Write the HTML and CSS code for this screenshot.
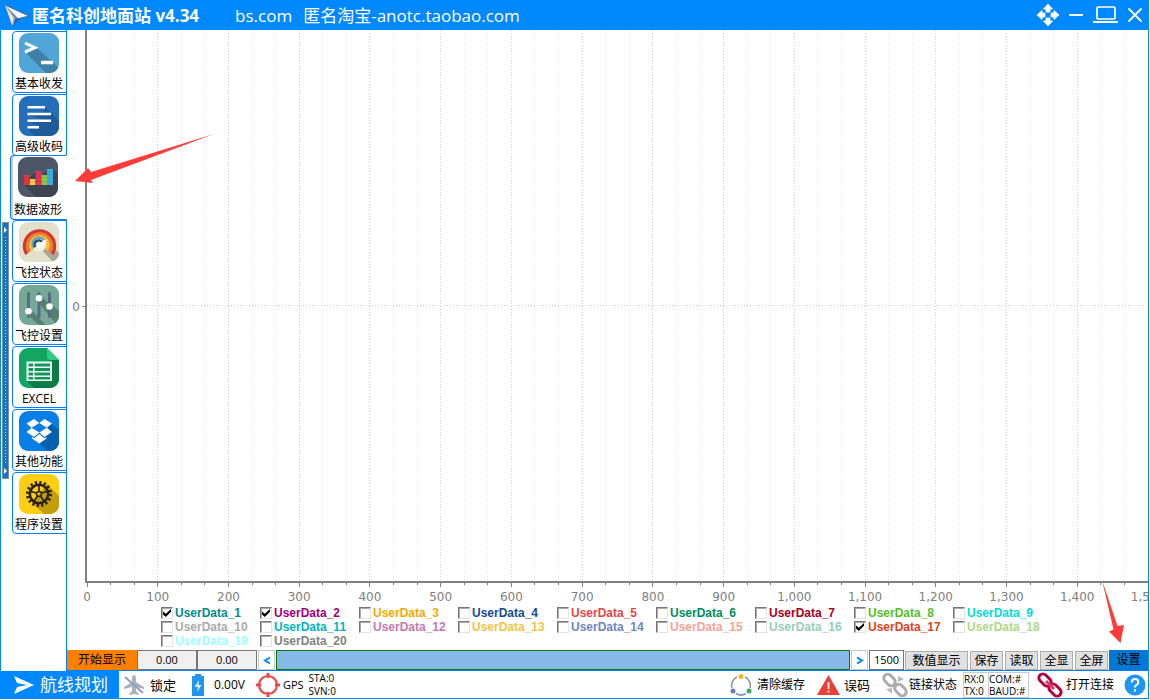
FILE: index.html
```html
<!DOCTYPE html>
<html lang="zh-CN">
<head>
<meta charset="utf-8">
<title>匿名科创地面站 v4.34</title>
<link rel="stylesheet" href="styles.css">
</head>
<body>
<div class="window">
  <header class="titlebar">
    <svg class="logo" viewBox="0 0 26 24"><path d="M1 1 25 12 15 15 8 22Z" fill="#f4f8fc" stroke="#51677f"/><path d="M1 1 15 15 11 15 8 22Z" fill="#7a8b9c"/><path d="M1 1 10 14 8 21Z" fill="#dfe8ef"/><path d="M11 15 23 12 15 15 9 21Z" fill="#1a62bb"/></svg>
    <h1 class="app-name">匿名科创地面站 v4.34</h1>
    <span class="site">bs.com</span>
    <span class="site">匿名淘宝-anotc.taobao.com</span>
    <div class="window-buttons">
      <button class="win-btn" aria-label="移动"><svg width="22" height="22" viewBox="0 0 22 22"><path d="M11 0 15.500 5H13V8H9V5H6.500ZM11 22 6.500 17H9V14H13V17H15.500ZM0 11 5 6.500V9H8V13H5V15.500ZM22 11 17 15.500V13H14V9H17V6.500Z" fill="#fff" stroke="#fff" stroke-width=".8"/></svg></button>
      <button class="win-btn" aria-label="最小化"><svg width="14" height="22" viewBox="0 0 14 22"><path d="M0 11H14" stroke="#fff" stroke-width="2"/></svg></button>
      <button class="win-btn" aria-label="最大化"><svg width="25" height="22" viewBox="0 0 25 22"><rect x="4" y="3" width="18" height="12" rx="1" fill="none" stroke="#fff" stroke-width="1.700"/><path d="M0 18H25" stroke="#fff" stroke-width="2"/></svg></button>
      <button class="win-btn" aria-label="关闭"><svg width="14" height="22" viewBox="0 0 14 22"><path d="M1 5 13 17M13 5 1 17" stroke="#fff" stroke-width="1.800" stroke-linecap="round"/></svg></button>
    </div>
  </header>

  <div class="main">
    <div class="splitter"><span class="grip-arrow"></span><span class="grip"></span><span class="grip-arrow"></span></div>
    <nav class="tabs">
      <button class="tab">
        <svg class="tab-icon" viewBox="0 0 40 40"><rect width="40" height="40" fill="#50a7d7"/><path d="M17 14 40 35V40H27L7 20Z" fill="#3f7fa8"/><path d="M6 10 16 14.700 6 19" fill="none" stroke="#fff" stroke-width="3"/><path d="M22 29.500H34" stroke="#fff" stroke-width="3.600"/></svg>
        基本收发</button>
      <button class="tab">
        <svg class="tab-icon" viewBox="0 0 40 40"><rect width="40" height="40" fill="#236fb9"/><path d="M26 11 40 25V40H16L8 32 20 30 8 25 25 24 8 18 25 17Z" fill="#1e5b9b"/><path d="M8.500 11.300H26M8.500 18H32M8.500 24.700H32M8.500 31.300H20" stroke="#fff" stroke-width="2.600"/></svg>
        高级收码</button>
      <button class="tab selected">
        <svg class="tab-icon" viewBox="0 0 40 40"><rect width="40" height="40" fill="#4c5666"/><path d="M35 12 40 17V40H18L6 28 18 14 24 18Z" fill="#3b444f"/><path d="M6 18H12V28H6Z" fill="#e8343c"/><path d="M12 22H17.500V28H12Z" fill="#e5cf4b"/><path d="M17.500 14H23.500V28H17.500Z" fill="#e8325e"/><path d="M23.500 18H29V28H23.500Z" fill="#8fc53f"/><path d="M29 12H35V28H29Z" fill="#38b0e4"/><path d="M6 20.500H12M6 23H12M6 25.500H12M12 24.500H29M17.500 17H23.500M17.500 20.500H29M29 15H35M29 18H35M29 21H35M29 24H35" stroke="#000" stroke-opacity=".13" stroke-width=".7"/></svg>
        数据波形</button>
      <button class="tab">
        <svg class="tab-icon" viewBox="0 0 40 40"><rect width="40" height="40" fill="#e2e2cc"/><path d="M27 19 40 31V40H34L19 24Z" fill="#aaa993"/><g fill="none" stroke-width="3.400"><path d="M7.800 32A15 15 0 1 1 33.200 32" stroke="#d3343c"/><path d="M10.500 30A11.800 11.800 0 1 1 30.500 30" stroke="#f07c22"/><path d="M13.500 28A8.600 8.600 0 1 1 27.500 28" stroke="#f4bd3c"/></g><circle cx="20" cy="22.500" r="7.300" fill="#f1f0de"/><path d="M15 26A6 6 0 0 1 25 18" fill="none" stroke="#5aa5c8" stroke-width="2.500"/><path d="M16.500 25A4 4 0 0 1 23 20" fill="none" stroke="#294c67" stroke-width="2.500"/><path d="M28.500 17.500 22 25.500A3 3 0 0 1 18 22Z" fill="#fff"/></svg>
        飞控状态</button>
      <button class="tab">
        <svg class="tab-icon" viewBox="0 0 40 40"><rect width="40" height="40" fill="#75a897"/><path d="M11 24 27 40H20L7 28ZM22 11 40 28V40H38L18 16ZM32 19 40 26V34L28 23Z" fill="#55806f"/><path d="M9.500 8.500V31.500M20 8.500V31.500M30.500 8.500V31.500" stroke="#576c85" stroke-width="3" stroke-linecap="round"/><g fill="#fff"><circle cx="9.500" cy="26.300" r="3.300"/><circle cx="20" cy="13.300" r="3.300"/><circle cx="30.500" cy="21.500" r="3.300"/></g></svg>
        飞控设置</button>
      <button class="tab">
        <svg class="tab-icon" viewBox="0 0 40 40"><path d="M0 0H28L40 12V40H0Z" fill="#11a661"/><path d="M33 14 28 11 40 12V40H15L8 33H33Z" fill="#0a7d47"/><path d="M28 0 40 12H31Q28 12 28 9Z" fill="#2bce82"/><path d="M7.500 13.500H33V33H7.500Z" fill="#f2faf5"/><path d="M9.500 15.500H14V18.500H9.500ZM9.500 20H14V23H9.500ZM9.500 24.500H14V27.500H9.500ZM9.500 29H14V31.500H9.500ZM15.500 15.500H31V18.500H15.500ZM15.500 20H31V23H15.500ZM15.500 24.500H31V27.500H15.500ZM15.500 29H31V31.500H15.500Z" fill="#11995a"/></svg>
        EXCEL</button>
      <button class="tab">
        <svg class="tab-icon" viewBox="0 0 40 40"><rect width="40" height="40" fill="#087fe6"/><path d="M32 12 40 19V40H28L20 32 13 25 31 22 28 17Z" fill="#0560b0"/><path d="M15 8 20.300 12 12.600 16.800 7.500 12.500ZM25.300 8 33 12.500 27.800 16.800 20.300 12ZM12.600 16.800 20.300 21.500 15 26 7.500 21ZM27.800 16.800 33 21 25.300 26 20.300 21.500ZM20.300 23 25.400 27.200 27.500 26V27.600L20.300 32.500 13 27.600V26L15 27.200Z" fill="#fff"/></svg>
        其他功能</button>
      <button class="tab">
        <svg class="tab-icon" viewBox="0 0 40 40"><rect width="40" height="40" fill="#fdce12"/><path d="M28 10 40 22V40H25L13 29Z" fill="#c49d0c"/><g fill="none" stroke="#2a2411"><circle cx="20" cy="20" r="11.600" stroke-width="3" stroke-dasharray="2.200 2.355"/><circle cx="20" cy="20" r="9.200" stroke-width="2.600"/><circle cx="20" cy="20" r="2.500" stroke-width="1.500"/><path d="M20 17V11M22.800 19 28.500 17.300M21.700 22.300 25 27M18.300 22.300 15 27M17.200 19 11.500 17.300" stroke-width="1.700"/></g></svg>
        程序设置</button>
    </nav>

    <main class="content">
      <div class="chart">
        <div class="y-axis"><span>0</span><i class="y-tick"></i></div>
        <div class="plot"><svg class="grid-lines" id="grid"></svg></div>
        <svg class="x-axis" id="axis"></svg>
      </div>

      <div class="legend">
        <label class="series" style="color:#008c8c"><input type="checkbox" checked>UserData_1</label>
        <label class="series" style="color:#a0007c"><input type="checkbox" checked>UserData_2</label>
        <label class="series" style="color:#f0aa00"><input type="checkbox">UserData_3</label>
        <label class="series" style="color:#144b91"><input type="checkbox">UserData_4</label>
        <label class="series" style="color:#e64646"><input type="checkbox">UserData_5</label>
        <label class="series" style="color:#008c5a"><input type="checkbox">UserData_6</label>
        <label class="series" style="color:#aa0023"><input type="checkbox">UserData_7</label>
        <label class="series" style="color:#5abe28"><input type="checkbox">UserData_8</label>
        <label class="series" style="color:#00dcdc"><input type="checkbox">UserData_9</label>
        <label class="series" style="color:#aaaaaa"><input type="checkbox">UserData_10</label>
        <label class="series" style="color:#00b4be"><input type="checkbox">UserData_11</label>
        <label class="series" style="color:#c878af"><input type="checkbox">UserData_12</label>
        <label class="series" style="color:#f5c346"><input type="checkbox">UserData_13</label>
        <label class="series" style="color:#6e87c3"><input type="checkbox">UserData_14</label>
        <label class="series" style="color:#f5a596"><input type="checkbox">UserData_15</label>
        <label class="series" style="color:#96cdb9"><input type="checkbox">UserData_16</label>
        <label class="series" style="color:#e14123"><input type="checkbox" checked>UserData_17</label>
        <label class="series" style="color:#afd787"><input type="checkbox">UserData_18</label>
        <label class="series" style="color:#a0ffff"><input type="checkbox">UserData_19</label>
        <label class="series" style="color:#828282"><input type="checkbox">UserData_20</label>
      </div>

      <div class="toolbar">
        <button class="start">开始显示</button>
        <output class="value">0.00</output>
        <output class="value">0.00</output>
        <div class="scroller">
          <button class="step" aria-label="向左"><svg width="8" height="9" viewBox="0 0 8 9"><path d="M7 1.500 2 4.500 7 7.500" fill="none" stroke="#0088ff" stroke-width="2"/></svg></button>
          <div class="track"></div>
          <button class="step" aria-label="向右"><svg width="8" height="9" viewBox="0 0 8 9"><path d="M1 1.500 6 4.500 1 7.500" fill="none" stroke="#0088ff" stroke-width="2"/></svg></button>
        </div>
        <input class="points" type="text" value="1500" aria-label="点数">
        <div class="actions">
          <button class="action wide">数值显示</button>
          <button class="action">保存</button>
          <button class="action">读取</button>
          <button class="action">全显</button>
          <button class="action">全屏</button>
        </div>
        <button class="settings">设置</button>
      </div>

      <svg class="callout callout-left" viewBox="0 0 140 50"><path d="M0 47 13 34 16 38 139 0 16 46 18 49Z" fill="#ff3c38"/></svg>
      <svg class="callout callout-right" viewBox="0 0 24 63"><path d="M1 0 16.500 46 23 45 19.500 63 8 51.500 12.500 49.500Z" fill="#ff3c38"/></svg>
    </main>
  </div>

  <footer class="statusbar">
    <button class="route"><svg width="22" height="20" viewBox="0 0 22 20"><path d="M1 1 21 10 1 19 4 12 14 10 4 8Z" fill="#fff"/></svg>航线规划</button>
    <div class="group lock"><svg width="22" height="22" viewBox="0 0 22 22"><path d="M11 1Q13 1 13 5V8L21 13V15L13 13V17L16 20V21L11 20 6 21V20L9 17V13L1 15V13L9 8V5Q9 1 11 1Z" fill="#a9b4b8"/><path d="M2 3 20 19" stroke="#9797ce" stroke-width="2"/></svg><span class="medium">锁定</span></div>
    <div class="group battery"><svg width="12" height="22" viewBox="0 0 12 22"><path d="M3 0H9V2H12V22H0V2H3Z" fill="#2196f0"/><path d="M7 6 2.500 13H6L5 18 9.500 11H6.500Z" fill="#d8efff"/></svg><span>0.00V</span></div>
    <div class="group gps"><svg width="24" height="24" viewBox="0 0 24 24"><g fill="none" stroke="#ed4b4b"><circle cx="12" cy="12" r="9" stroke-width="2.200"/><path d="M12 0V5M12 19V24M0 12H5M19 12H24" stroke-width="3"/></g></svg><span class="small">GPS</span><div class="pair"><span>STA:0</span><span>SVN:0</span></div></div>
    <div class="right-group">
      <button class="group cache"><svg width="22" height="22" viewBox="0 0 22 22"><g fill="none" stroke="#8996ad" stroke-width="1.600"><path d="M7 3A9.300 9.300 0 0 0 2 14M15 3A9.300 9.300 0 0 1 20 14M6 19.500A9.300 9.300 0 0 0 16 19.500"/></g><circle cx="11" cy="2.500" r="2.500" fill="#f2b91d"/><circle cx="3" cy="17" r="2.500" fill="#6d78c0"/><circle cx="19" cy="17" r="2.500" fill="#38ad5c"/></svg>清除缓存</button>
      <div class="group error"><svg width="23" height="20" viewBox="0 0 23 20"><path d="M11.500 0 23 20H0Z" fill="#e84039"/><path d="M11.500 7V14M11.500 15.500V17.500" stroke="#ffe5dd" stroke-width="2"/></svg><span class="medium">误码</span></div>
      <div class="group link"><svg width="26" height="26" viewBox="0 0 26 26"><g fill="none" stroke="#acacac" stroke-width="3"><rect x="1" y="4" width="13" height="8" rx="4" transform="rotate(45 7.500 8)"/><rect x="12" y="14" width="13" height="8" rx="4" transform="rotate(45 18.500 18)"/></g><path d="M16 4 22 7 16 10ZM10 16V22L4 17Z" fill="#b8b8b8"/></svg>链接状态</div>
      <div class="port"><div class="pair"><span>RX:0</span><span>TX:0</span></div><div class="pair com"><span>COM:#</span><span>BAUD:#</span></div></div>
      <button class="group connect"><svg width="26" height="26" viewBox="0 0 26 26"><g fill="none" stroke="#b8003e" stroke-width="3"><rect x="1" y="4" width="14" height="8" rx="4" transform="rotate(45 8 8)"/><rect x="11" y="14" width="14" height="8" rx="4" transform="rotate(45 18 18)"/></g><path d="M9 9 17 17" stroke="#d83c6c" stroke-width="3"/></svg>打开连接</button>
      <button class="help" aria-label="帮助"><svg width="22" height="22" viewBox="0 0 22 22"><circle cx="11" cy="11" r="10.500" fill="#2196ee"/><path d="M7.700 8.500Q7.800 5 11 5T14.300 8.200Q14.300 10 12.300 11.200 11 12 11 13.500M11 15.300V17.600" fill="none" stroke="#fff" stroke-width="2"/></svg></button>
    </div>
  </footer>
</div>
<script src="chart.js"></script>
</body>
</html>
```

FILE: styles.css
```css
* { box-sizing: border-box; }

body {
  margin: 0;
  background: #fff;
  color: #000;
  font: 12px/14px "Open Sans", "Noto Sans CJK SC", sans-serif;
}

button {
  margin: 0;
  padding: 0;
  border: 0;
  background: none;
  color: inherit;
  font: inherit;
  white-space: nowrap;
}

svg { display: block; flex: none; }

.window {
  display: flex;
  flex-direction: column;
  height: calc(100vh - 1px);
  margin-right: 1px;
  border: 1px solid #0088ff;
}

/* Title bar */
.titlebar {
  display: flex;
  align-items: center;
  height: 29px;
  flex: none;
  padding: 0 6px 0 3px;
  background: #0088ff;
  color: #fff;
  font-size: 17px;
  line-height: 28px;
  white-space: nowrap;
}
.logo { width: 26px; height: 24px; }
.app-name { margin: 0 36px 0 2px; font-size: 17px; font-weight: 700; }
.site { margin-right: 11px; }
.window-buttons { display: flex; align-items: center; gap: 10px; margin-left: auto; padding-bottom: 2px; }

/* Body */
.main { display: flex; flex: 1; min-height: 0; }

.splitter {
  display: flex;
  flex-direction: column;
  align-items: center;
  align-self: center;
  width: 7px;
  height: 40%;
  margin: 0 3px 0 1px;
  padding: 4px 0;
  border: 1px solid #8c8c8c;
  background: #0078d7;
}
.grip { flex: 1; width: 1px; margin: 4px 0; background: repeating-linear-gradient(#fff 0 1px, transparent 1px 3px); }
.grip-arrow { border: 3px solid transparent; border-left: 3px solid #fff; border-right: 0; }

.tabs { display: flex; flex-direction: column; gap: 1px; width: 54px; padding-top: 1px; flex: none; }
.tab {
  position: relative;
  display: flex;
  flex-direction: column;
  align-items: center;
  gap: 4px;
  height: 62px;
  margin: 0 -1px 0 0;
  padding: 1px 1px 0 0;
  border: 1px solid #0080ff;
  border-radius: 4px 0 0 4px;
  background: #fff;
}
.tab-icon { width: 40px; height: 40px; border-radius: 9px; }
.selected {
  z-index: 1;
  height: 65px;
  margin: -2px -1px -1px -2px;
  border-right-color: #fff;
  box-shadow: inset 2px 0 #ccc;
}
.selected .tab-icon { margin-bottom: 2px; }

.content {
  position: relative;
  display: flex;
  flex-direction: column;
  flex: 1;
  min-width: 0;
  border-left: 1px solid #0080ff;
  border-bottom: 1px solid #0080ff;
}

/* Chart */
.chart { display: grid; grid-template-columns: 18px 1fr; grid-template-rows: 1fr 23px; flex: 1; min-height: 0; color: #808080; font: 12px/14px "DejaVu Sans", sans-serif; }
.y-axis { display: flex; align-items: center; justify-content: flex-end; gap: 2px; }
.y-tick { width: 3px; height: 1px; background: #808080; }
.plot { min-height: 0; border-left: 2px solid #808080; border-bottom: 2px solid #808080; }
.grid-lines { width: 100%; height: 100%; shape-rendering: crispEdges; }
.grid-lines line { stroke: #e8e8e8; stroke-dasharray: 1 2; }
.grid-lines .major { stroke: #cfcfcf; }
.x-axis { grid-column: 2; width: calc(100% - 2px); height: 23px; margin-left: 2px; overflow: visible; clip-path: inset(0 0 0 -10px); }
.x-axis line { stroke: #808080; shape-rendering: crispEdges; }
.x-axis text { fill: #808080; text-anchor: middle; }

/* Legend */
.legend {
  display: grid;
  grid-template-columns: repeat(9, 99px);
  grid-auto-rows: 14px;
  justify-content: center;
  padding-bottom: 2px;
  margin-right: 2px;
  font: bold 12px/14px "Liberation Sans", Arial, sans-serif;
}
.series { display: flex; align-items: center; gap: 2px; }
.series input {
  appearance: none;
  width: 12px;
  height: 12px;
  margin: 0;
  border: 1px solid #e3e3e3;
  border-top-color: #777;
  border-left-color: #777;
  background: #fff;
  box-shadow: inset 1px 1px #aaa;
}
.series input:checked::before {
  content: "";
  display: block;
  width: 8px;
  height: 8px;
  margin: 1px;
  background: #000;
  clip-path: polygon(0 30%, 35% 60%, 100% 0, 100% 35%, 35% 100%, 0 70%);
}

/* Toolbar */
.toolbar { display: flex; align-items: stretch; height: 20px; flex: none; }
.start { width: 70px; background: #ff8000; }
.value { width: 60px; border: 1px solid #777; background: #f0f0f0; font-size: 11px; line-height: 18px; text-align: center; }
.scroller { display: flex; flex: 1; gap: 1px; margin: 0 1px; }
.step { display: grid; place-items: center; width: 17px; border: 1px solid #c8c8c8; }
.track { flex: 1; border: 1px solid #008000; background: #88b8ea; }
.points { width: 35px; padding: 0; border: 1px solid #777; background: #fff; font: 11px/18px "Open Sans", sans-serif; text-align: center; }
.actions { display: flex; gap: 2px; margin: 1px 1px 0 1px; }
.action { width: 33px; border: 1px solid #adadad; background: #e1e1e1; }
.wide { width: 63px; }
.settings { width: 39px; background: #0078d7; }

.callout { position: absolute; }
.callout-left { left: 8px; top: 104px; width: 140px; height: 50px; }
.callout-right { right: 23px; bottom: 27px; width: 24px; height: 63px; }

/* Status bar */
.statusbar { display: flex; align-items: center; height: 27px; flex: none; white-space: nowrap; }
.route { display: flex; align-items: center; gap: 5px; width: 118px; height: 27px; padding-left: 12px; background: #0088ff; color: #fff; font-size: 17px; }
.group { display: flex; align-items: center; }
.medium { font-size: 13px; }
.small { font-size: 11px; }
.lock { gap: 5px; margin-left: 4px; }
.battery { gap: 10px; margin-left: 16px; }
.gps { gap: 3px; margin-left: 11px; }
.pair { display: flex; flex-direction: column; font-size: 10px; line-height: 13px; }
.gps .pair { margin-left: 2px; }
.right-group { display: flex; align-items: center; margin-left: auto; padding-right: 2px; }
.cache { gap: 5px; }
.error { gap: 4px; margin-left: 12px; }
.link { gap: 1px; margin-left: 12px; }
.port { display: flex; margin-left: 6px; border: 1px solid #ccc; }
.port .pair { width: 24px; line-height: 12px; }
.port .com { width: 40px; border-left: 1px solid #ccc; }
.connect { gap: 3px; margin-left: 8px; }
.help { margin-left: 10px; }
```

FILE: chart.js
```js
const NS = "http://www.w3.org/2000/svg";
const MAX = 1500;
const grid = document.getElementById("grid");
const axis = document.getElementById("axis");

function add(parent, tag, attrs, text) {
  const el = document.createElementNS(NS, tag);
  for (const key in attrs) el.setAttribute(key, attrs[key]);
  if (text) el.textContent = text;
  parent.appendChild(el);
}

const steps = MAX / 100 * 3;
for (let i = 0; i <= steps; i++) {
  const x = (i / steps) * 100 + "%";
  const major = i % 3 === 0;
  if (i > 0) add(grid, "line", { x1: x, x2: x, y1: 0, y2: "100%", class: major ? "major" : "minor" });
  add(axis, "line", { x1: x, x2: x, y1: 0, y2: major ? 4 : 2 });
  if (major) add(axis, "text", { x: x, y: 18 }, (i / 3 * 100).toLocaleString("en-US"));
}
add(grid, "line", { x1: 0, x2: "100%", y1: "50%", y2: "50%", class: "major" });
```
